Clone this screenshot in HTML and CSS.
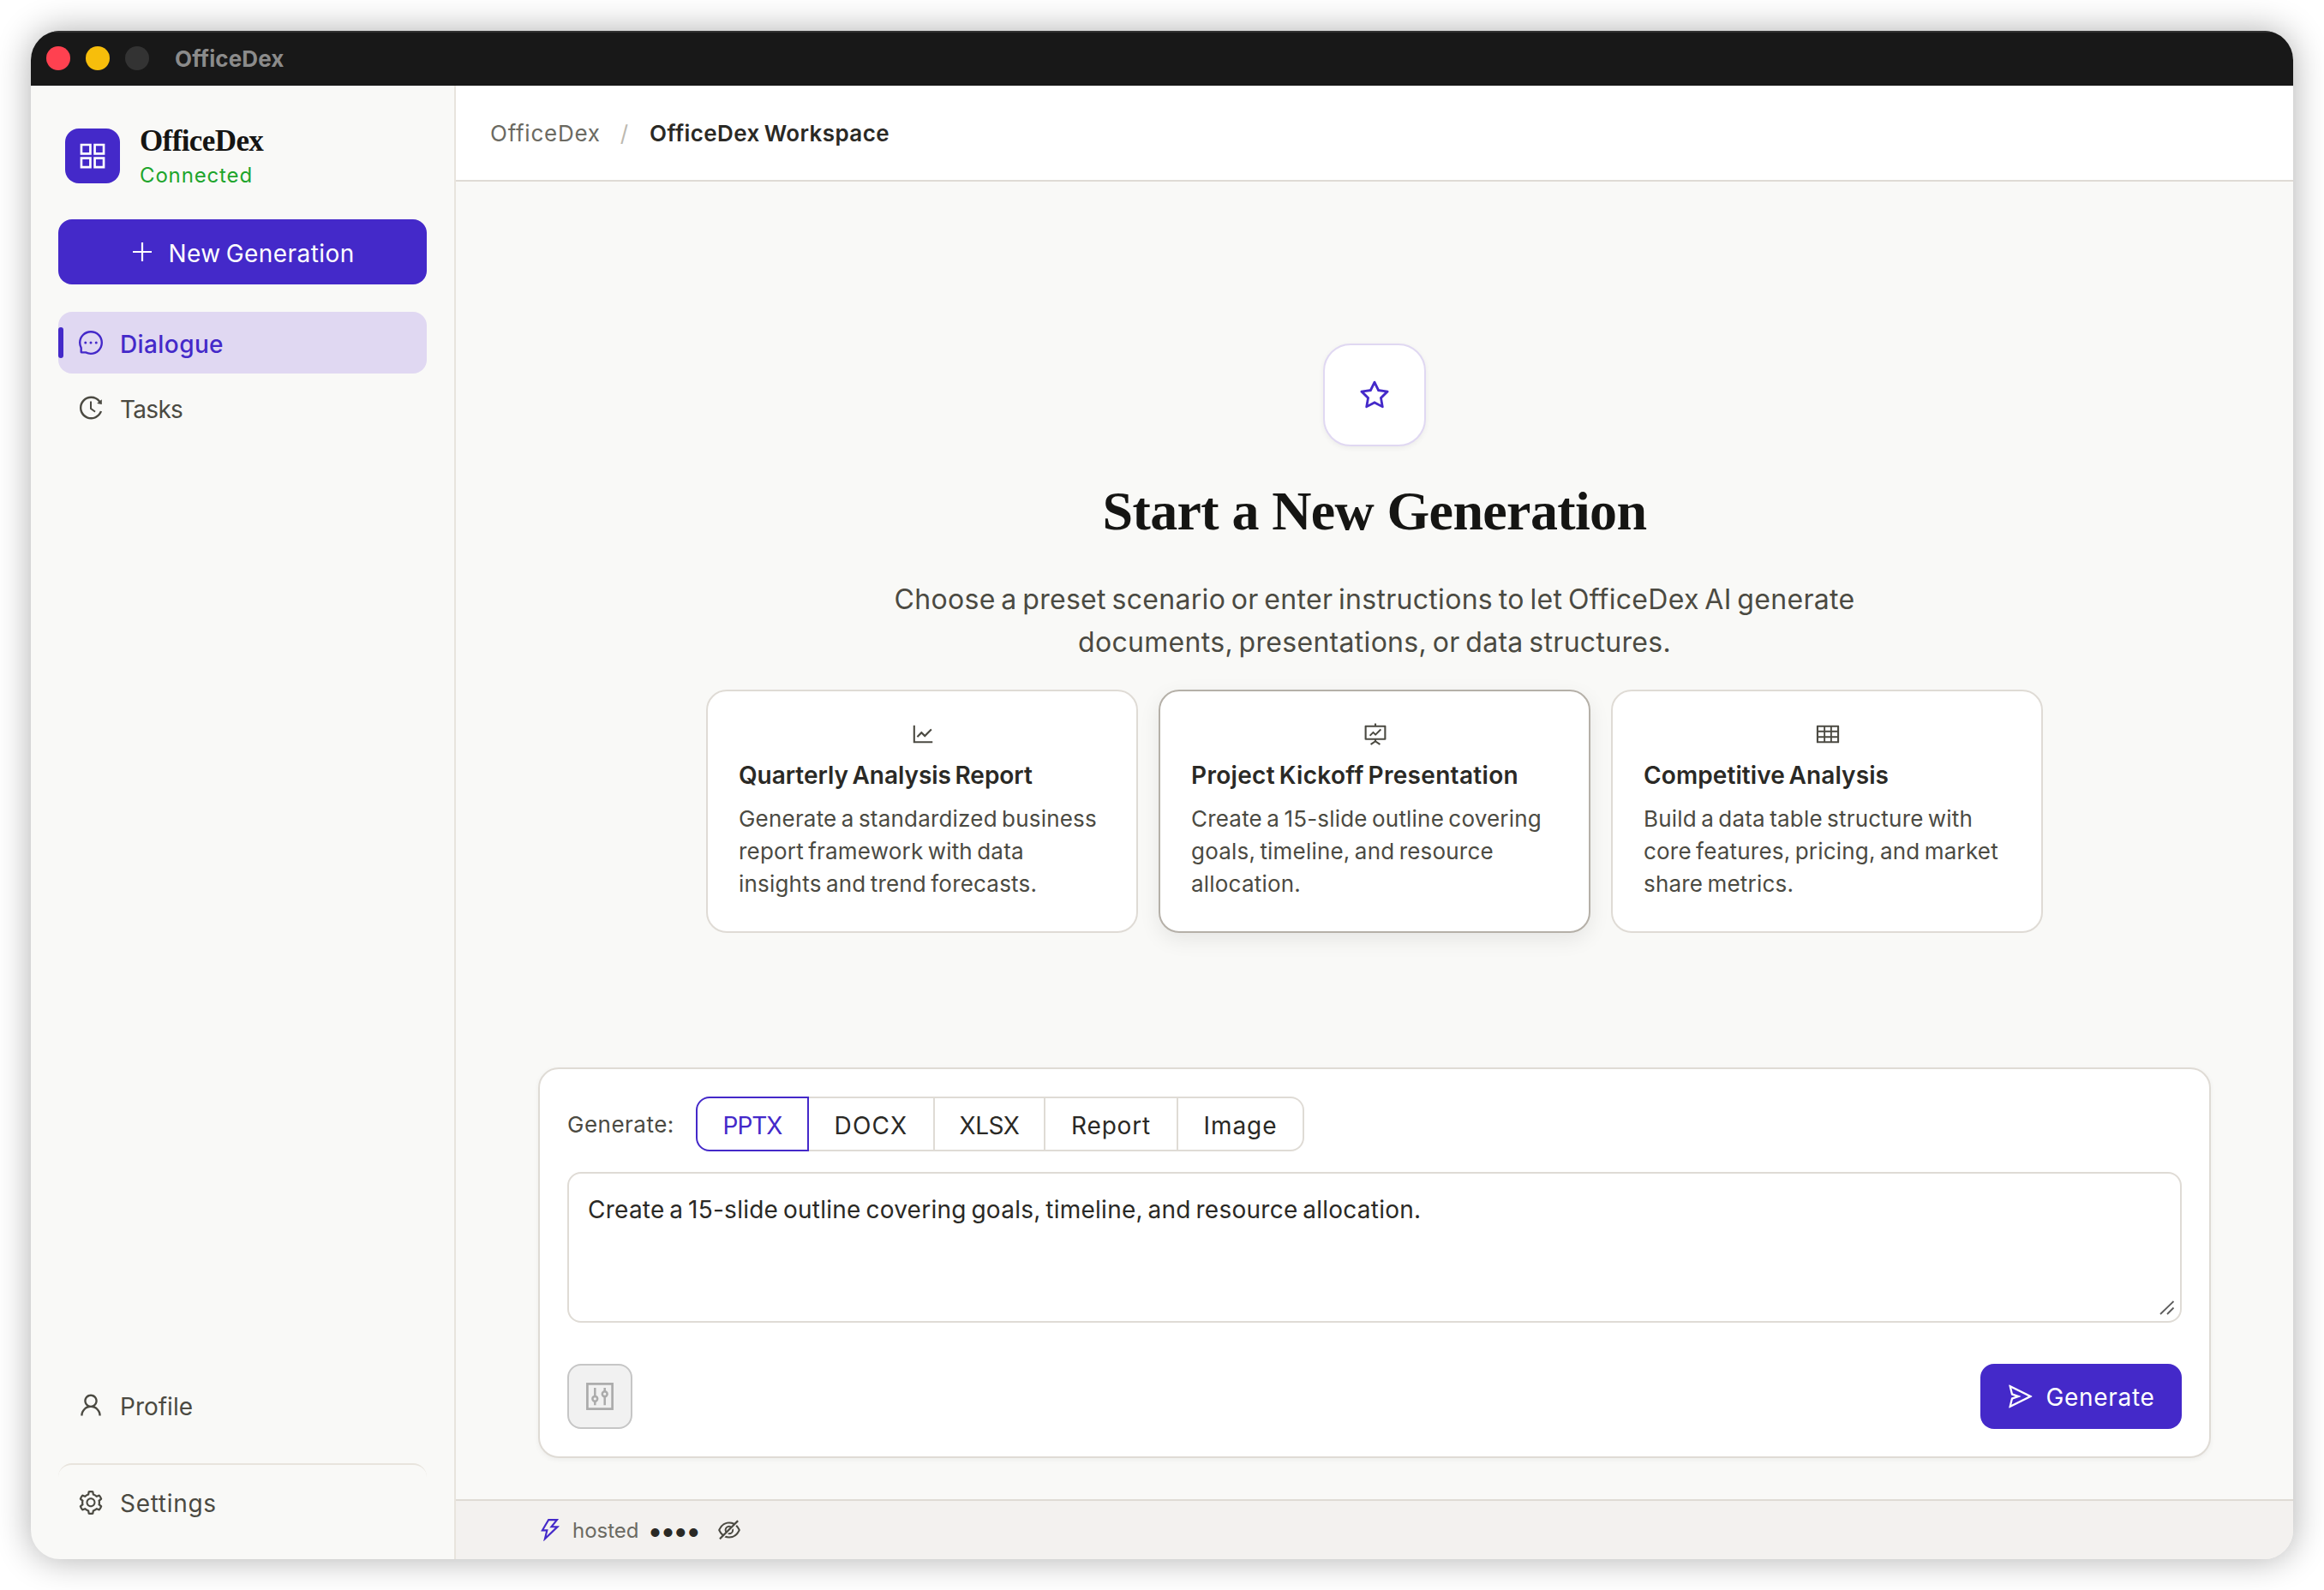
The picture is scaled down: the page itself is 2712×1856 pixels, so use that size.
FILE: index.html
```html
<!DOCTYPE html>
<html lang="en">
<head>
<meta charset="utf-8">
<title>OfficeDex</title>
<link rel="stylesheet" href="styles.css">
</head>
<body>
<div class="window">
  <header class="titlebar">
    <span class="light light-close"></span>
    <span class="light light-min"></span>
    <span class="light light-max"></span>
    <span class="titlebar-name">OfficeDex</span>
  </header>
  <div class="shell">
    <aside class="sidebar">
      <div class="brand">
        <span class="brand-logo">
          <svg width="40" height="40" viewBox="0 0 1024 1024" fill="none" stroke="currentColor" stroke-width="68"><path d="M178 178h268v268H178zM578 178h268v268H578zM178 578h268v268H178zM578 578h268v268H578z"/></svg>
        </span>
        <div class="brand-info">
          <div class="brand-name">OfficeDex</div>
          <div class="brand-status">Connected</div>
        </div>
      </div>
      <button class="btn btn-new">
        <svg width="28" height="28" viewBox="0 0 28 28" fill="none" stroke="currentColor" stroke-width="2.2"><path d="M14 3v22M3 14h22"/></svg>
        <span class="btn-new-label">New Generation</span>
      </button>
      <nav class="nav">
        <a class="nav-item nav-item-active">
          <svg width="32" height="32" viewBox="0 0 1024 1024" fill="currentColor"><path d="M464 512a48 48 0 1096 0 48 48 0 10-96 0zm200 0a48 48 0 1096 0 48 48 0 10-96 0zm-400 0a48 48 0 1096 0 48 48 0 10-96 0zm661.2-173.6c-22.6-53.7-55-101.9-96.3-143.3a444.35 444.35 0 00-143.3-96.3C630.6 75.7 572.2 64 512 64h-2c-60.6.3-119.3 12.3-174.5 35.9a445.35 445.35 0 00-142 96.5c-40.9 41.3-73 89.3-95.2 142.8-23 55.4-34.6 114.3-34.3 174.9A449.4 449.4 0 00112 714v152a46 46 0 0046 46h152.1A449.4 449.4 0 00510 960h2.1c59.9 0 118-11.6 172.7-34.3a444.48 444.48 0 00142.8-95.2c41.3-40.9 73.8-88.7 96.5-142 23.6-55.2 35.6-113.9 35.9-174.5.3-60.9-11.5-120-34.8-175.6zm-151.1 438C704 845.8 611 884 512 884h-1.7c-60.3-.3-120.2-15.3-173.1-43.5l-8.4-4.5H188V695.2l-4.5-8.4C155.3 633.9 140.3 574 140 513.7c-.4-99.7 37.7-193.3 107.6-263.8 69.8-70.5 163.1-109.5 262.8-109.9h1.7c50 0 98.5 9.7 144.2 28.9 44.6 18.7 84.6 45.6 119 80 34.3 34.3 61.3 74.4 80 119 19.4 46.2 29.1 95.2 28.9 145.8-.6 99.6-39.7 192.9-110.1 262.7z"/></svg>
          <span class="nav-label label-dialogue">Dialogue</span>
        </a>
        <a class="nav-item">
          <svg width="32" height="32" viewBox="0 0 1024 1024" fill="currentColor"><path d="M536.1 273H488c-4.4 0-8 3.6-8 8v275.3c0 2.6 1.2 5 3.3 6.5l165.3 120.7c3.6 2.6 8.6 1.9 11.2-1.7l28.6-39c2.7-3.7 1.9-8.7-1.7-11.2L544.1 528.5V281c0-4.4-3.6-8-8-8zm219.8 75.2l156.8 38.3c5 1.2 9.9-2.6 9.9-7.7l.8-161.5c0-6.7-7.7-10.5-12.9-6.3L752.9 334.1a8 8 0 003 14.1zm167.7 301.1l-56.7-19.5a8 8 0 00-10.1 4.8c-1.9 5.1-3.9 10.1-6 15.1-17.8 42.1-43.3 80-75.9 112.5a353 353 0 01-112.5 75.9 352.18 352.18 0 01-137.7 27.8c-47.8 0-94.1-9.3-137.7-27.8a353 353 0 01-112.5-75.9c-32.5-32.5-58-70.4-75.9-112.5A353.44 353.44 0 01171 512c0-47.8 9.3-94.2 27.8-137.8 17.8-42.1 43.3-80 75.9-112.5a353 353 0 01112.5-75.9C430.6 167.3 477 158 524.8 158s94.1 9.3 137.7 27.8A353 353 0 01775 261.7c10.2 10.3 19.8 21 28.6 32.3l59.8-46.8C784.7 146.6 662.2 81.9 524.6 82 285 82.1 92.6 276.7 95 516.4 97.4 751.9 288.9 942 524.8 942c185.5 0 343.5-117.6 403.7-282.3 1.5-4.2-.7-8.9-4.9-10.4z"/></svg>
          <span class="nav-label label-tasks">Tasks</span>
        </a>
      </nav>
      <nav class="nav nav-bottom">
        <a class="nav-item">
          <svg width="32" height="32" viewBox="0 0 1024 1024" fill="currentColor"><path d="M858.5 763.6a374 374 0 00-80.6-119.5 375.63 375.63 0 00-119.5-80.6c-.4-.2-.8-.3-1.2-.5C719.5 518 760 444.7 760 362c0-137-111-248-248-248S264 225 264 362c0 82.7 40.5 156 102.8 201.1-.4.2-.8.3-1.2.5-44.8 18.9-85 46-119.5 80.6a375.63 375.63 0 00-80.6 119.5A371.7 371.7 0 00136 901.8a8 8 0 008 8.2h60c4.4 0 7.9-3.5 8-7.8 2-77.2 33-149.5 87.8-204.3 56.7-56.7 132-87.9 212.2-87.9s155.5 31.2 212.2 87.9C779 752.7 810 825 812 902.2c.1 4.4 3.6 7.8 8 7.8h60a8 8 0 008-8.2c-1-47.8-10.9-94.3-29.5-138.2zM512 534c-45.9 0-89.1-17.9-121.6-50.4S340 407.9 340 362c0-45.9 17.9-89.1 50.4-121.6S466.1 190 512 190s89.1 17.9 121.6 50.4S684 316.1 684 362c0 45.9-17.9 89.1-50.4 121.6S557.9 534 512 534z"/></svg>
          <span class="nav-label">Profile</span>
        </a>
        <a class="nav-item nav-item-settings">
          <svg width="32" height="32" viewBox="0 0 1024 1024" fill="currentColor"><path d="M924.8 625.7l-65.5-56c3.1-19 4.7-38.4 4.7-57.8s-1.6-38.8-4.7-57.8l65.5-56a32.03 32.03 0 009.3-35.2l-.9-2.6a443.74 443.74 0 00-79.7-137.9l-1.8-2.1a32.12 32.12 0 00-35.1-9.5l-81.3 28.9c-30-24.6-63.5-44-99.7-57.6l-15.7-85a32.05 32.05 0 00-25.8-25.7l-2.7-.5c-52.1-9.4-106.9-9.4-159 0l-2.7.5a32.05 32.05 0 00-25.8 25.7l-15.8 85.4a351.86 351.86 0 00-99 57.4l-81.9-29.1a32 32 0 00-35.1 9.5l-1.8 2.1a446.02 446.02 0 00-79.7 137.9l-.9 2.6c-4.5 12.5-.8 26.5 9.3 35.2l66.3 56.6c-3.1 18.8-4.6 38-4.6 57.1 0 19.2 1.5 38.4 4.6 57.1L99 625.5a32.03 32.03 0 00-9.3 35.2l.9 2.6c18.1 50.4 44.9 96.9 79.7 137.9l1.8 2.1a32.12 32.12 0 0035.1 9.5l81.9-29.1c29.8 24.5 63.1 43.9 99 57.4l15.8 85.4a32.05 32.05 0 0025.8 25.7l2.7.5a449.4 449.4 0 00159 0l2.7-.5a32.05 32.05 0 0025.8-25.7l15.7-85a350 350 0 0099.7-57.6l81.3 28.9a32 32 0 0035.1-9.5l1.8-2.1c34.8-41.1 61.6-87.5 79.7-137.9l.9-2.6c4.5-12.3.8-26.3-9.3-35zM788.3 465.9c2.5 15.1 3.8 30.6 3.8 46.1s-1.3 31-3.8 46.1l-6.6 40.1 74.7 63.9a370.03 370.03 0 01-42.6 73.6L721 702.8l-31.4 25.8c-23.9 19.6-50.5 35-79.3 45.8l-38.1 14.3-17.9 97a377.5 377.5 0 01-85 0l-17.9-97.2-37.8-14.5c-28.5-10.8-55-26.2-78.7-45.7l-31.4-25.9-93.4 33.2c-17-22.9-31.2-47.6-42.6-73.6l75.5-64.5-6.5-40c-2.4-14.9-3.7-30.3-3.7-45.5 0-15.3 1.2-30.6 3.7-45.5l6.5-40-75.5-64.5c11.3-26.1 25.6-50.7 42.6-73.6l93.4 33.2 31.4-25.9c23.7-19.5 50.2-34.9 78.7-45.7l37.9-14.3 17.9-97.2c28.1-3.2 56.8-3.2 85 0l17.9 97 38.1 14.3c28.7 10.8 55.4 26.2 79.3 45.8l31.4 25.8 92.8-32.9c17 22.9 31.2 47.6 42.6 73.6L781.8 426l6.5 39.9zM512 326c-97.2 0-176 78.8-176 176s78.8 176 176 176 176-78.8 176-176-78.8-176-176-176zm79.2 255.2A111.6 111.6 0 01512 614c-29.9 0-58-11.7-79.2-32.8A111.6 111.6 0 01400 502c0-29.9 11.7-58 32.8-79.2C454 401.6 482.1 390 512 390c29.9 0 58 11.6 79.2 32.8A111.6 111.6 0 01624 502c0 29.9-11.7 58-32.8 79.2z"/></svg>
          <span class="nav-label label-settings">Settings</span>
        </a>
      </nav>
    </aside>
    <main class="main">
      <div class="topbar">
        <span class="crumb">OfficeDex</span>
        <span class="crumb-sep">/</span>
        <span class="crumb-current">OfficeDex Workspace</span>
      </div>
      <section class="hero">
        <div class="hero-icon">
          <svg width="40" height="40" viewBox="0 0 1024 1024" fill="currentColor"><path d="M908.1 353.1l-253.9-36.9L540.7 86.1c-3.1-6.3-8.2-11.4-14.5-14.5-15.8-7.8-35-1.3-42.9 14.5L369.8 316.2l-253.9 36.9c-7 1-13.4 4.3-18.3 9.3a32.05 32.05 0 00.6 45.3l183.7 179.1-43.4 252.9a31.95 31.95 0 0046.4 33.7L512 754l227.1 119.4c6.2 3.3 13.4 4.4 20.3 3.2 17.4-3 29.1-19.5 26.1-36.9l-43.4-252.9 183.7-179.1c5-4.9 8.3-11.3 9.3-18.3 2.7-17.5-9.5-33.7-27-36.3zM664.8 561.6l36.1 210.3L512 672.7 323.1 772l36.1-210.3-152.8-149L417.6 382 512 190.7 606.4 382l211.2 30.7-152.8 148.9z"/></svg>
        </div>
        <h1 class="hero-title">Start a New Generation</h1>
        <p class="hero-text">Choose a preset scenario or enter instructions to let OfficeDex AI generate<br>documents, presentations, or data structures.</p>
        <div class="cards">
          <article class="card">
            <svg class="card-icon" width="30" height="30" viewBox="0 0 1024 1024" fill="currentColor"><path d="M888 792H200V168c0-4.4-3.6-8-8-8h-56c-4.4 0-8 3.6-8 8v688c0 4.4 3.6 8 8 8h752c4.4 0 8-3.6 8-8v-56c0-4.4-3.6-8-8-8zM305.8 637.7c3.1 3.1 8.1 3.1 11.3 0l138.3-137.6L583 628.5c3.1 3.1 8.2 3.1 11.3 0l275.4-275.3c3.1-3.1 3.1-8.2 0-11.3l-39.6-39.6a8.03 8.03 0 00-11.3 0l-230 229.9L461.4 404a8.03 8.03 0 00-11.3 0L266.3 586.7a8.03 8.03 0 000 11.3l39.5 39.7z"/></svg>
            <h2 class="card-title">Quarterly Analysis Report</h2>
            <p class="card-text">Generate a standardized business<br>report framework with data<br>insights and trend forecasts.</p>
          </article>
          <article class="card card-selected">
            <svg class="card-icon" width="30" height="30" viewBox="0 0 1024 1024" fill="currentColor"><path d="M312.1 591.5c3.1 3.1 8.2 3.1 11.3 0l101.8-101.8 86.1 86.2c3.1 3.1 8.2 3.1 11.3 0l226.3-226.5c3.1-3.1 3.1-8.2 0-11.3l-36.8-36.8a8.03 8.03 0 00-11.3 0L517 485.3l-86.1-86.2a8.03 8.03 0 00-11.3 0L275.3 543.4a8.03 8.03 0 000 11.3l36.8 36.8zM904 160H548V96c0-4.4-3.6-8-8-8h-56c-4.4 0-8 3.6-8 8v64H120c-17.7 0-32 14.3-32 32v520c0 17.7 14.3 32 32 32h356.4v32L311.6 884.1a7.92 7.92 0 00-2.3 11l30.3 47.2v.1c2.4 3.7 7.4 4.7 11.1 2.3L512 838.9l161.3 105.8c3.7 2.4 8.7 1.4 11.1-2.3v-.1l30.3-47.2a8 8 0 00-2.3-11L548 776.3V744h356c17.7 0 32-14.3 32-32V192c0-17.7-14.3-32-32-32zm-40 512H160V232h704v440z"/></svg>
            <h2 class="card-title card-title-kickoff">Project Kickoff Presentation</h2>
            <p class="card-text">Create a 15-slide outline covering<br>goals, timeline, and resource<br>allocation.</p>
          </article>
          <article class="card">
            <svg class="card-icon" width="30" height="30" viewBox="0 0 1024 1024" fill="currentColor"><path d="M928 160H96c-17.7 0-32 14.3-32 32v640c0 17.7 14.3 32 32 32h832c17.7 0 32-14.3 32-32V192c0-17.7-14.3-32-32-32zm-40 208H676V232h212v136zm0 224H676V432h212v160zM412 432h200v160H412V432zm200-64H412V232h200v136zm-476 64h212v160H136V432zm0-200h212v136H136V232zm0 424h212v136H136V656zm276 0h200v136H412V656zm476 136H676V656h212v136z"/></svg>
            <h2 class="card-title card-title-competitive">Competitive Analysis</h2>
            <p class="card-text">Build a data table structure with<br>core features, pricing, and market<br>share metrics.</p>
          </article>
        </div>
      </section>
      <section class="composer">
        <div class="formats">
          <span class="formats-label">Generate:</span>
          <div class="segments">
            <span class="segment segment-active segment-pptx">PPTX</span>
            <span class="segment segment-docx">DOCX</span>
            <span class="segment segment-xlsx">XLSX</span>
            <span class="segment segment-report">Report</span>
            <span class="segment segment-image">Image</span>
          </div>
        </div>
        <div class="prompt">
          <span class="prompt-text">Create a 15-slide outline covering goals, timeline, and resource allocation.</span>
          <svg class="prompt-grip" width="18" height="18" viewBox="0 0 18 18" fill="none" stroke="#5c5c5c" stroke-width="1.8"><path d="M1 16L16.5 1M9 16L16.5 8.5"/></svg>
        </div>
        <div class="actions">
          <span class="btn-options">
            <svg width="36" height="36" viewBox="0 0 36 36" fill="none" stroke="currentColor" stroke-width="2.7"><rect x="3.4" y="3.4" width="29.2" height="29.2"/><g stroke-width="2.5"><path d="M12.3 8v9.500M12.3 24v4.200M23.700 8v4.200M23.700 18.500v9.700"/><circle cx="12.3" cy="20.800" r="2.900"/><circle cx="23.700" cy="15.200" r="2.900"/></g></svg>
          </span>
          <button class="btn btn-generate">
            <svg width="32" height="32" viewBox="0 0 1024 1024" fill="currentColor"><path d="M931.4 498.9L94.9 79.5c-3.4-1.7-7.3-2.1-11-1.2a15.99 15.99 0 00-11.7 19.3l86.2 352.2c1.3 5.3 5.2 9.6 10.4 11.3l147.7 50.7-147.6 50.7c-5.2 1.8-9.1 6-10.3 11.3L72.2 926.5c-.9 3.7-.5 7.6 1.2 10.9 3.9 7.9 13.5 11.1 21.5 7.2l836.5-417c3.1-1.5 5.6-4.1 7.2-7.1 3.9-8 .7-17.6-7.2-21.6zM170.8 826.3l50.3-205.6 295.2-101.3c2.3-.8 4.2-2.6 5-5 1.4-4.2-.8-8.7-5-10.2L221.1 403 171 198.2l628 314.9-628.2 313.2z"/></svg>
            <span class="btn-generate-label">Generate</span>
          </button>
        </div>
      </section>
      <footer class="statusbar">
        <svg class="status-bolt" width="32" height="32" viewBox="0 0 1024 1024" fill="currentColor"><path d="M848 359.3H627.7L825.8 109c4.1-5.3.4-13-6.3-13H436c-2.8 0-5.5 1.5-6.9 4L170 547.5c-3.1 5.3.7 12 6.9 12h174.4l-89.4 357.6c-1.9 7.8 7.5 13.3 13.3 7.7L853.5 373c5.2-4.9 1.7-13.7-5.5-13.7zM378.2 732.5l60.3-241H281.1l189.6-327.4h224.6L487 427.4h211L378.2 732.5z"/></svg>
        <span class="status-mode">hosted</span>
        <span class="status-mask">••••</span>
        <svg class="status-eye" width="30" height="30" viewBox="0 0 1024 1024" fill="currentColor"><path d="M942.2 486.2Q889.47 375.11 816.7 305l-50.88 50.88C807.31 395.53 843.45 447.4 874.7 512 791.5 684.2 673.4 766 512 766q-72.67 0-133.87-22.38L323 798.75Q408 838 512 838q288.3 0 430.2-300.3a60.29 60.29 0 000-51.5zm-63.57-320.64L836 122.88a8 8 0 00-11.32 0L715.31 232.2Q624.86 186 512 186q-288.3 0-430.2 300.3a60.3 60.3 0 000 51.5q56.69 119.4 136.5 191.41L112.48 835a8 8 0 000 11.31L155.17 889a8 8 0 0011.31 0l712.15-712.12a8 8 0 000-11.32zM149.3 512C232.6 339.8 350.7 258 512 258c54.54 0 104.13 9.36 149.12 28.39l-70.3 70.3a176 176 0 00-238.13 238.13l-83.42 83.42C223.1 637.49 183.3 582.28 149.3 512zm246.7 0a112.11 112.11 0 01146.2-106.69L401.31 546.2A112 112 0 01396 512z"/><path d="M508 624c-3.46 0-6.87-.16-10.25-.47l-52.82 52.82a176.09 176.09 0 00227.42-227.42l-52.82 52.82c.31 3.38.47 6.79.47 10.25a111.94 111.94 0 01-112 112z"/></svg>
      </footer>
    </main>
  </div>
</div>
</body>
</html>
```
FILE: styles.css
```css
* { box-sizing: border-box; }
html, body { height: 100%; }
body {
  margin: 0;
  padding: 36px;
  background: #fff;
  color: #2a2925;
  font-family: Inter, "Liberation Sans", sans-serif;
  font-size: 28px;
  overflow: hidden;
}
svg { display: block; flex: none; }
h1, h2, p { margin: 0; }
span { white-space: nowrap; }

.window {
  width: 2640px;
  height: 1784px;
  border-radius: 34px;
  background: #f9f9f7;
  box-shadow: 0 0 40px rgba(0, 0, 0, .32);
  display: flex;
  flex-direction: column;
  overflow: hidden;
}
.titlebar {
  height: 64px;
  padding: 0 0 2px 18px;
  background: #181818;
  border-top: 2px solid #303030;
  display: flex;
  align-items: center;
  gap: 18px;
}
.light { width: 28px; height: 28px; border-radius: 50%; flex: none; }
.light-close { background: #ff4150; }
.light-min { background: #f7be0b; }
.light-max { background: #333; }
.titlebar-name { margin-left: 12px; color: #8b8b8b; font-size: 26px; font-weight: 700; letter-spacing: .1px; }

.shell { flex: 1; display: flex; min-height: 0; }
.sidebar {
  width: 496px;
  padding: 44px 32px 40px;
  border-right: 2px solid #e8e4dd;
  display: flex;
  flex-direction: column;
}
.brand { display: flex; align-items: center; gap: 23px; padding-left: 8px; }
.brand-logo {
  width: 64px; height: 64px;
  margin-bottom: 1px;
  border-radius: 16px;
  background: #4429c9;
  color: #fff;
  display: flex; align-items: center; justify-content: center;
}
.brand-name { padding-top: 1px; color: #151513; font: 700 35px/40px "Liberation Serif", serif; letter-spacing: -.6px; }
.brand-status { margin-top: 4px; color: #1ea52c; font-size: 24px; line-height: 32px; letter-spacing: .85px; }
.btn {
  border: 0;
  border-radius: 16px;
  background: #4429c9;
  color: #fff;
  font: 400 28px/36px Inter, sans-serif;
  height: 76px;
  padding: 0;
  display: flex; align-items: center; justify-content: center;
}
.btn-new { margin-top: 35px; gap: 16px; }
.btn-new-label { padding-top: 3px; letter-spacing: .42px; word-spacing: -2px; }
.nav { margin-top: 32px; display: flex; flex-direction: column; gap: 4px; }
.nav-item {
  height: 72px;
  padding-left: 22px;
  border-radius: 16px;
  color: #4b4a42;
  display: flex; align-items: center; gap: 18px;
  position: relative;
}
.nav-label { padding-top: 3px; line-height: 36px; }
.label-dialogue { letter-spacing: .4px; }
.label-tasks { letter-spacing: -.7px; }
.label-settings { letter-spacing: .7px; }
.nav-item-active { background: #e0d8f2; color: #4429c9; font-weight: 500; }
.nav-item-active::before {
  content: "";
  position: absolute;
  left: 0; top: 18px;
  width: 6px; height: 36px;
  border-radius: 3px;
  background: #4429c9;
}
.nav-bottom { margin-top: auto; gap: 32px; }
.nav-item-settings { border-top: 2px solid #e8e4dd; padding-top: 18px; }
.nav-item-settings .nav-label { padding-top: 1px; }

.main { flex: 1; display: flex; flex-direction: column; min-width: 0; }
.topbar {
  height: 112px;
  padding-left: 40px;
  background: #fff;
  border-bottom: 2px solid #dfdbd5;
  display: flex; align-items: center;
  font-size: 26px;
}
.crumb { color: #6b6a62; letter-spacing: .75px; }
.crumb-sep { margin: 0 25px 0 23px; color: #bdb9b0; }
.crumb-current { font-weight: 600; letter-spacing: .4px; word-spacing: -2px; }

.hero { flex: 1; padding-top: 189px; display: flex; flex-direction: column; align-items: center; }
.hero-icon {
  width: 120px; height: 120px;
  padding-top: 2px;
  border: 2px solid #e0d8f2;
  border-radius: 32px;
  background: #fff;
  color: #4429c9;
  box-shadow: 0 2px 6px rgba(0, 0, 0, .06);
  display: flex; align-items: center; justify-content: center;
}
.hero-title { margin-top: 38px; color: #151513; font: 700 64px/76px "Liberation Serif", serif; letter-spacing: -.63px; white-space: nowrap; }
.hero-text { margin-top: 40px; color: #4b4a42; font-size: 32px; line-height: 50px; letter-spacing: .3px; word-spacing: -2.6px; text-align: center; white-space: nowrap; }
.cards { margin-top: 30px; display: grid; grid-template-columns: repeat(3, 504px); gap: 24px; }
.card {
  height: 284px;
  padding: 35px 34px 0 36px;
  border: 2px solid #dfdbd5;
  border-radius: 24px;
  background: #fff;
  white-space: nowrap;
}
.card-selected { border-color: #b5b0a8; box-shadow: 0 8px 24px rgba(0, 0, 0, .08); }
.card-icon { margin: 0 auto; color: #4b4a42; }
.card-title { margin-top: 15px; font-size: 28px; line-height: 36px; font-weight: 600; letter-spacing: -.03px; word-spacing: -2.5px; }
.card-title-kickoff { letter-spacing: .32px; }
.card-title-competitive { letter-spacing: .1px; }
.card-text { margin-top: 14px; color: #4b4a42; font-size: 26px; line-height: 38px; letter-spacing: .2px; word-spacing: -2.2px; }

.composer {
  height: 456px;
  margin: 0 96px 48px;
  padding: 32px;
  border: 2px solid #dfdbd5;
  border-radius: 24px;
  background: #fff;
  box-shadow: 0 2px 6px rgba(0, 0, 0, .05);
  display: flex; flex-direction: column;
}
.formats { display: flex; align-items: center; }
.formats-label { width: 150px; color: #4b4a42; font-size: 26px; letter-spacing: .5px; }
.segments { display: flex; height: 64px; }
.segment {
  border: 2px solid #dfdbd5;
  border-left-width: 0;
  padding-top: 3px;
  display: flex; align-items: center; justify-content: center;
}
.segment-active { border: 2px solid #4429c9; border-radius: 16px 0 0 16px; color: #4429c9; }
.segment-pptx { width: 132px; letter-spacing: -1px; }
.segment-docx { width: 147px; letter-spacing: 1.2px; }
.segment-xlsx { width: 129px; letter-spacing: -.4px; }
.segment-report { width: 155px; letter-spacing: .8px; }
.segment-image { width: 147px; border-radius: 0 16px 16px 0; letter-spacing: .9px; }
.prompt {
  height: 176px;
  margin-top: 24px;
  padding: 20px 22px;
  border: 2px solid #dfdbd5;
  border-radius: 16px;
  line-height: 44px;
  position: relative;
}
.prompt-text { letter-spacing: .25px; word-spacing: -2.35px; }
.prompt-grip { position: absolute; right: 6px; bottom: 6px; }
.actions { margin-top: 48px; display: flex; justify-content: space-between; }
.btn-options {
  width: 76px; height: 76px;
  border: 2px solid #c6c6c6;
  border-radius: 16px;
  background: #f1f1f1;
  color: #ababab;
  display: flex; align-items: center; justify-content: center;
}
.btn-generate { width: 235px; gap: 13px; }
.btn-generate-label { padding-top: 2px; letter-spacing: .7px; }

.statusbar {
  height: 70px;
  padding-left: 94px;
  border-top: 2px solid #dfdbd5;
  background: #f3f1ef;
  display: flex; align-items: center;
}
.status-bolt { color: #4429c9; }
.status-mode { margin-left: 10px; color: #6b6a62; font-size: 24px; }
.status-mask { margin-left: 10px; font-size: 32px; letter-spacing: -3.1px; }
.status-eye { margin-left: 21px; color: #4b4a42; }
```
